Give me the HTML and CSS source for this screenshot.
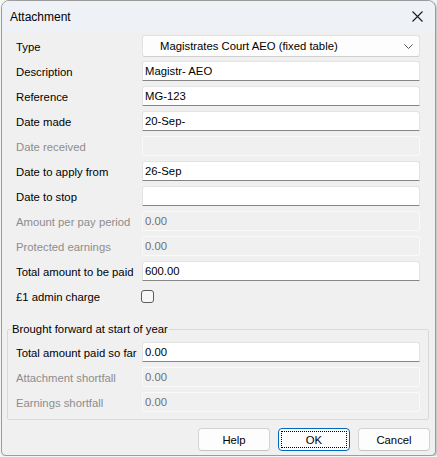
FILE: index.html
```html
<!DOCTYPE html>
<html>
<head>
<meta charset="utf-8">
<link rel="stylesheet" href="styles.css">
</head>
<body>
<div class="window">
  <div class="titlebar">
    <span class="title">Attachment</span>
    <span class="close">
      <svg width="11" height="11" viewBox="0 0 11 11"><path d="M0.5 0.5 L10.5 10.5 M10.5 0.5 L0.5 10.5" stroke="#1a1a1a" stroke-width="1.1" fill="none"/></svg>
    </span>
  </div>
  <div class="body">
    <div class="form">
      <label class="lbl">Type</label>
      <div class="combo"><span>Magistrates Court AEO (fixed table)</span>
        <svg class="chev" width="9" height="5" viewBox="0 0 9 5"><path d="M0.5 0.5 L4.5 4.5 L8.5 0.5" stroke="#555" stroke-width="1" fill="none"/></svg>
      </div>
      <label class="lbl">Description</label>
      <div class="input">Magistr- AEO</div>
      <label class="lbl">Reference</label>
      <div class="input">MG-123</div>
      <label class="lbl">Date made</label>
      <div class="input">20-Sep-</div>
      <label class="lbl dis">Date received</label>
      <div class="input disabled"></div>
      <label class="lbl">Date to apply from</label>
      <div class="input">26-Sep</div>
      <label class="lbl">Date to stop</label>
      <div class="input"></div>
      <label class="lbl dis">Amount per pay period</label>
      <div class="input disabled">0.00</div>
      <label class="lbl dis">Protected earnings</label>
      <div class="input disabled">0.00</div>
      <label class="lbl">Total amount to be paid</label>
      <div class="input">600.00</div>
      <label class="lbl">£1 admin charge</label>
      <div class="checkcell"><span class="checkbox"></span></div>
    </div>
    <fieldset class="group">
      <legend>Brought forward at start of year</legend>
      <div class="form inner">
        <label class="lbl">Total amount paid so far</label>
        <div class="input">0.00</div>
        <label class="lbl dis">Attachment shortfall</label>
        <div class="input disabled">0.00</div>
        <label class="lbl dis">Earnings shortfall</label>
        <div class="input disabled">0.00</div>
      </div>
    </fieldset>
    <div class="buttons">
      <button class="btn">Help</button>
      <button class="btn default"><span class="focus">OK</span></button>
      <button class="btn">Cancel</button>
    </div>
  </div>
</div>
</body>
</html>
```
FILE: styles.css
```css
html, body {
  margin: 0;
  padding: 0;
}
body {
  background: #f4f6f4;
  font-family: "Liberation Sans", Arial, sans-serif;
  font-size: 11.3px;
  color: #000;
}
.window {
  box-sizing: border-box;
  margin-left: 1px;
  width: 435px;
  height: 456px;
  border: 1px solid #9c9c9c;
  border-radius: 8px 8px 5px 5px;
  background: #f0f0f0;
  overflow: hidden;
  box-shadow: 1px 1px 2px rgba(0,0,0,0.25);
}
.titlebar {
  height: 30px;
  display: flex;
  align-items: center;
  justify-content: space-between;
  background: #eef2f7;
  padding-left: 8px;
}
.title {
  font-size: 12px;
  margin-top: 1px;
}
.close {
  display: flex;
  width: 40px;
  justify-content: center;
  margin-right: -2px;
  margin-top: 1px;
}
.body {
  padding: 5px 5px 0 0;
}
.form {
  display: grid;
  grid-template-columns: 126px 278px;
  grid-auto-rows: 20px;
  row-gap: 5px;
  padding-left: 14px;
}
.lbl {
  display: flex;
  align-items: center;
  white-space: nowrap;
  line-height: 14px;
  padding-top: 1px;
}
.lbl.dis {
  color: #8d8d8d;
}
.combo {
  box-sizing: border-box;
  display: flex;
  align-items: center;
  justify-content: space-between;
  background: #fdfdfd;
  border: 1px solid #e2e2e2;
  border-bottom-color: #cfcfcf;
  border-radius: 3px;
  padding: 0 6px 0 17px;
  margin-bottom: -1px;
  margin-top: -1px;
}
.form > .combo + .lbl { margin-top: 1px; }
.input {
  box-sizing: border-box;
  display: flex;
  align-items: center;
  background: #fff;
  border: 1px solid #e3e3e3;
  border-bottom: 1px solid #868686;
  border-radius: 3px 3px 1px 1px;
  padding-left: 2px;
  white-space: nowrap;
}
.input.disabled {
  background: #f0f0f0;
  border: 1px solid #fafafa;
  border-radius: 2px;
  color: #707070;
}
.checkcell {
  display: flex;
  align-items: center;
}
.checkbox {
  box-sizing: border-box;
  width: 13px;
  height: 13px;
  border: 1px solid #5c5c5c;
  border-radius: 3px;
  background: #f7f7f7;
  margin-left: -1px;
}
.group {
  box-sizing: border-box;
  margin: 15px 0 0 5px;
  width: 422px;
  border: 1px solid #d9d9d9;
  border-radius: 2px;
  padding: 5px 0 7px 0;
}
.group legend {
  padding: 0 1px;
  margin-left: 3px;
  line-height: 16px;
}
.form.inner {
  padding-left: 8px;
}
.buttons {
  display: flex;
  justify-content: flex-end;
  gap: 8px;
  margin-top: 8px;
}
.btn {
  box-sizing: border-box;
  width: 72px;
  height: 23px;
  font-family: "Liberation Sans", Arial, sans-serif;
  font-size: 11.3px;
  color: #000;
  background: #fdfdfd;
  border: 1px solid #d3d3d3;
  border-bottom-color: #c2c2c2;
  border-radius: 4px;
  padding: 0;
}
.btn.default {
  border: 1px solid #0067c0;
  padding: 2px;
}
.focus {
  box-sizing: border-box;
  display: flex;
  align-items: center;
  justify-content: center;
  width: 100%;
  height: 100%;
  border: 1px dotted #000;
}
```
